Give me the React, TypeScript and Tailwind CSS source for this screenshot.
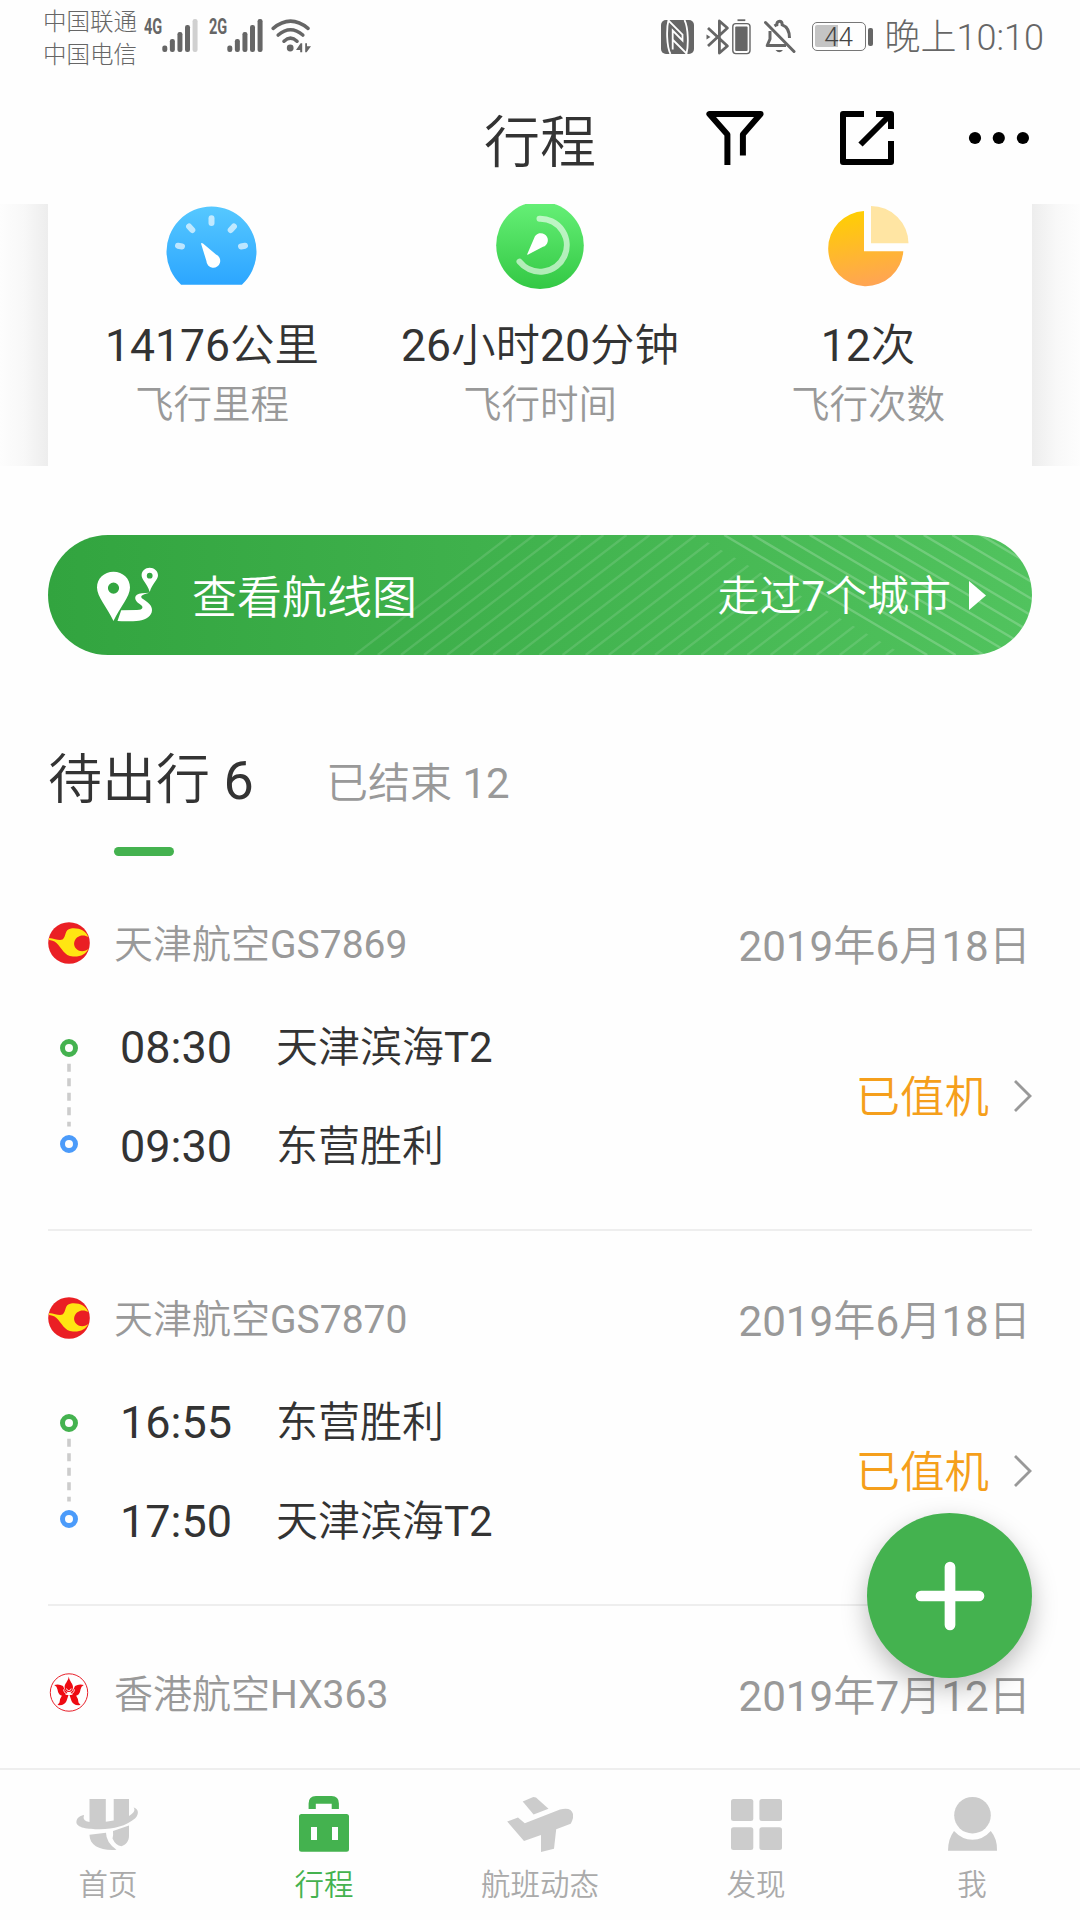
import React from 'react';

type IconProps = { className?: string };

function SignalBars({ weak = false }: { weak?: boolean }) {
  const heights = [6.5, 13, 20, 27, 33];
  return (
    <svg className="h-[33px] w-[36px]" viewBox="0 0 36 33">
      {heights.map((h, i) => (
        <rect key={h} x={0.3 + i * 7.57} y={33 - h} width="5" height={h} rx="2.2" fill={weak && i === 4 ? '#d0d0d0' : '#666'} />
      ))}
    </svg>
  );
}

function WifiIcon() {
  return (
    <svg className="h-[34px] w-[40px]" viewBox="0 0 40 34" fill="none" stroke="#666" strokeLinecap="round">
      <path d="M2.2 9.4Q19.5-5 37 9.4" strokeWidth="3.6" />
      <path d="M7.2 16Q19.5 5.5 31.8 16" strokeWidth="3.6" />
      <path d="M13 22.2Q19.5 16.2 26 22.2" strokeWidth="3.6" />
      <circle cx="19.2" cy="29" r="3.4" fill="#666" stroke="none" />
      <path d="M25 31l4.6-6.8h1.6v9h-2V31zM34.2 24.2h1.8v3h4l-4.4 6h-1.4z" fill="#666" stroke="none" />
    </svg>
  );
}

function NfcIcon() {
  return (
    <svg className="h-[34px] w-[33px]" viewBox="0 0 33 34">
      <rect width="33" height="34" rx="5" fill="#666" />
      <path d="M7.500 0C5.400 8 5.400 26 9.500 34M23.500 0C27.500 8 27.500 26 25.400 34" fill="none" stroke="#fefefe" strokeWidth="1.800" />
      <path d="M7.500 0.500L21.500 14.500V20.500L11.700 10.500V29.500M12 20L25.500 33.500" fill="none" stroke="#fefefe" strokeWidth="1.800" />
    </svg>
  );
}

function BluetoothIcon() {
  return (
    <svg className="h-[36px] w-[45px]" viewBox="0 0 45 36" fill="none" stroke="#666">
      <path d="M2 9L21.400 27L13.400 34V2L21.400 9L2 27" strokeWidth="2.800" strokeLinejoin="round" />
      <path d="M0.500 15.500L4.500 18L0.500 20.500z" fill="#666" stroke="none" />
      <rect x="26.800" y="4.600" width="17.200" height="30" rx="3" strokeWidth="1.400" />
      <rect x="29.200" y="7.400" width="12.400" height="24.600" rx="1" fill="#666" stroke="none" />
      <path d="M31.500 1.200h7.800" strokeWidth="1.800" />
    </svg>
  );
}

function BellOffIcon() {
  return (
    <svg className="h-[35px] w-[32px]" viewBox="0 0 32 35" fill="none" stroke="#666" strokeWidth="3">
      <path d="M1.500 3.500L30 32.500" strokeLinecap="round" />
      <path d="M10.500 7Q12 6 12.800 5.800Q12.800 2.200 15.500 2.200Q18.200 2.200 18.200 5.800Q25.500 8.500 25.500 19" />
      <path d="M6 12V20L3.200 26.500H22" strokeLinejoin="round" />
      <path d="M11.500 31h7.500q-3.700 4.600-7.500 0z" fill="#666" stroke="none" />
    </svg>
  );
}

function StatusBattery() {
  return (
    <div className="flex items-center gap-[2px]">
      <div className="relative flex h-[29px] w-[54px] items-center justify-center rounded-[5px] border-[1.5px] border-[#777]">
        <div className="absolute top-[2px] left-[2px] h-[22px] w-[23px] rounded-l-[2px] bg-[#c4c4c4]" />
        <span className="relative font-['Roboto'] text-[26px] leading-[26px] font-light text-[#444]">44</span>
      </div>
      <div className="h-[18px] w-[5px] rounded-[2px] bg-[#666]" />
    </div>
  );
}

function FilterIcon() {
  return (
    <svg className="h-[54px] w-[58px]" viewBox="0 0 58 54" fill="none" stroke="#000" strokeWidth="6">
      <path d="M21.400 54V23.400L3.400 3H54.600L36.900 23.400V44.500" strokeLinejoin="round" />
    </svg>
  );
}

function ShareIcon() {
  return (
    <svg className="h-[54px] w-[54px]" viewBox="0 0 54 54" fill="none" stroke="#000" strokeWidth="6" strokeLinejoin="round">
      <path d="M24 3H3V51H51V30" />
      <path d="M36 3H51V18" />
      <path d="M50 4L20.500 33.500" />
    </svg>
  );
}

function MoreIcon() {
  return (
    <svg className="h-[14px] w-[62px]" viewBox="0 0 62 14">
      <circle cx="7" cy="7" r="6.100" />
      <circle cx="30.800" cy="7" r="6.100" />
      <circle cx="54.900" cy="7" r="6.100" />
    </svg>
  );
}

function GaugeIcon() {
  return (
    <svg className="h-[96px] w-[96px]" viewBox="0 0 96 96">
      <defs>
        <linearGradient id="gauge" x1="0" y1="0" x2="0" y2="1">
          <stop offset="0" stopColor="#56c8ff" />
          <stop offset="1" stopColor="#2ca6ff" />
        </linearGradient>
      </defs>
      <path d="M17.100 80.700A45 45 0 1 1 77.900 80.700z" fill="url(#gauge)" />
      <g stroke="#fff" strokeOpacity="0.650" strokeWidth="6" strokeLinecap="round">
        <path d="M47.500 14.300V19" />
        <path d="M25.100 22.500L28.300 26" />
        <path d="M69.900 22.500L66.700 26" />
        <path d="M14 41.700L18 42.500" />
        <path d="M81 41.700L77 42.500" />
      </g>
      <path d="M37 39.500Q37.700 38.300 39 39.600L52 50.500A6.900 6.900 0 1 1 42.400 57z" fill="#fff" />
    </svg>
  );
}

function ClockIcon() {
  return (
    <svg className="h-[96px] w-[96px]" viewBox="0 0 96 96">
      <defs>
        <linearGradient id="clock" x1="0" y1="0" x2="0" y2="1">
          <stop offset="0" stopColor="#66f077" />
          <stop offset="1" stopColor="#33c844" />
        </linearGradient>
      </defs>
      <circle cx="48" cy="41.300" r="43.800" fill="url(#clock)" />
      <path d="M47.500 14.700A26.500 26.500 0 1 1 27.500 57.700" fill="none" stroke="#fff" strokeOpacity="0.600" strokeWidth="6" strokeLinecap="round" />
      <path d="M35.300 50Q34.800 51 36.200 50.400L51 42.800A7 7 0 1 0 42.200 34z" fill="#fff" />
    </svg>
  );
}

function PieIcon() {
  return (
    <svg className="h-[96px] w-[96px]" viewBox="0 0 96 96">
      <defs>
        <linearGradient id="pie" x1="0.200" y1="0" x2="0.400" y2="1">
          <stop offset="0" stopColor="#ffd000" />
          <stop offset="1" stopColor="#ffa552" />
        </linearGradient>
      </defs>
      <path d="M44 7V47.200H83.300A37.600 37.600 0 1 1 44 7z" fill="url(#pie)" />
      <path d="M51 2A37.500 37.500 0 0 1 88.500 39.200H51z" fill="#ffe5a3" />
    </svg>
  );
}

function RouteIcon() {
  return (
    <svg className="h-[56px] w-[62px]" viewBox="0 0 62 56" fill="#fff">
      <path fillRule="evenodd" d="M16.500 4.700C7 4.700 0 11.500 0 20.500C0 30 10 40 16.500 54C23 40 33 30 33 20.500C33 11.500 26 4.700 16.500 4.700zM16.500 15.500a5.600 5.600 0 1 1 0 11.200a5.600 5.600 0 1 1 0-11.200z" />
      <path fillRule="evenodd" d="M52.700 0.700C48.200 0.700 44.600 4 44.600 8.300C44.600 13 50 16 52.700 25C55.500 16 61 13 61 8.300C61 4 57.200 0.700 52.700 0.700zM52.700 5.800a2.900 2.900 0 1 1 0 5.800a2.900 2.900 0 1 1 0-5.800z" />
      <path d="M20.500 54L24.200 43.200L40 43C46.500 42.800 46.800 39.500 43 37.200C36.500 33.500 36 27 45 26.200L52.500 25.700C44 27.500 42.500 29.500 46 32C51 35.500 55 38 55 43C55 49 49 53 42 53.700C37 54.200 28 54.500 20.500 54z" />
    </svg>
  );
}

function BannerLines() {
  const rising = Array.from({ length: 26 }, (_, i) => 306.7 + i * 23.1);
  const falling = Array.from({ length: 10 }, (_, i) => 676.2 + i * 28.5);
  return (
    <svg className="absolute inset-0 h-[120px] w-[984px]" viewBox="0 0 984 120" fill="none" stroke="#fff" strokeWidth="2.400">
      <defs>
        <clipPath id="rising">
          <path d="M0 0H647L856 120H0z" />
        </clipPath>
      </defs>
      <g clipPath="url(#rising)" strokeOpacity="0.120">
        {rising.map((x) => (
          <path key={x} d={`M${x} 120l156.300-120`} />
        ))}
      </g>
      <g strokeOpacity="0.200">
        {falling.map((x) => (
          <path key={x} d={`M${x} 0l203 120`} />
        ))}
      </g>
    </svg>
  );
}

function TianjinLogo() {
  return (
    <svg className="h-[42px] w-[42px]" viewBox="0 0 42 42">
      <circle cx="21" cy="21" r="20.800" fill="#ea1f24" />
      <path d="M1 16C7 16.500 11 19 14.500 17.500C18.500 15 16 7.500 23 6.500C31 5.500 38 9 40.300 15C37.500 13 32.500 12.500 29 15.500C25.500 18.500 25 24 28.500 27C32 30.500 38 29.500 40.500 26.500C38 32.500 32 35 25 34.500C16 34 14 26 8.500 21C6 18.700 3 18 1 18z" fill="#ffe512" />
    </svg>
  );
}

function HongKongLogo() {
  return (
    <svg className="h-[42px] w-[42px]" viewBox="0 0 42 42">
      <circle cx="21" cy="20.500" r="18.700" fill="none" stroke="#e8202a" strokeWidth="1" />
      <g fill="#ee0a12">
        <path d="M20.800 4.500C21.300 9.500 25.200 11.500 25 15.500Q24.500 20 20.800 20Q17 20 16.600 15.500C16.400 11.500 20.200 9.500 20.800 4.500z" />
        <path d="M35.800 13Q31 11.500 27 14Q25.500 18.500 22.500 21L26.500 24Q32 23.500 32.500 17.500Q33 14 35.800 13z" />
        <path d="M6.200 13Q11 11.500 15 14Q16.500 18.500 19.500 21L15.500 24Q10 23.500 9.500 17.500Q9 14 6.200 13z" />
        <path d="M21.500 23L27.500 22.500Q30.500 27 30.500 30.500L32.500 33Q25.500 34 23.500 29z" />
        <path d="M20.500 23L14.500 22.500Q11.500 27 11.500 30.500L9.500 33Q16.500 34 18.500 29z" />
      </g>
      <path d="M15.500 17.500Q16.500 22.500 21 22.500Q25.500 22.500 26.500 17.500M18.500 16.500Q18.800 18.600 20.800 18.600Q23 18.600 23.200 16.500" fill="none" stroke="#fff" strokeWidth="0.900" />
    </svg>
  );
}

function RouteDots() {
  return (
    <svg className="h-[116px] w-[20px]" viewBox="0 0 20 116" fill="none">
      <circle cx="10" cy="10" r="6.500" stroke="#44b24f" strokeWidth="5" />
      <path d="M10 25.700V88.500" stroke="#ccc" strokeWidth="3.600" strokeDasharray="8 6.500" />
      <circle cx="10" cy="106" r="6.500" stroke="#4b9bfa" strokeWidth="5" />
    </svg>
  );
}

function HomeIcon({ className }: IconProps) {
  return (
    <svg className={className} viewBox="0 0 64 56" fill="currentColor">
      <path d="M13.500 3H29.800V25.800L37.700 24.600V3H53V20C57 17.500 60 14.500 57.500 11.500C62 12.500 64 17.500 59 22.500C50 30 38 33 24 33.200C11 33.500 -1 31.500 0.500 25C1 22 4.500 19.300 8 19Q6 25 13.500 26z" />
      <path d="M13.500 38.800L30 36.800Q30 46.500 40.500 53.800C25 55 13.500 50 13.500 38.800z" />
      <path d="M37 35L53 29.500V40C53 45 50 49 45.500 50.200Q39.500 49.500 36.500 42.500Q37.500 39.500 37 35z" />
    </svg>
  );
}

function TripIcon({ className }: IconProps) {
  return (
    <svg className={className} viewBox="0 0 64 56" fill="currentColor">
      <path d="M16.600 13V7.500Q16.600 0 24 0H39.500Q46.900 0 46.900 7.500V13H39.700V7.800H23.800V13z" />
      <path fillRule="evenodd" d="M9.500 18H54.500Q57 18 57 20.500V53.300Q57 55.800 54.500 55.800H9.500Q7 55.800 7 53.300V20.500Q7 18 9.500 18zM19 31V44H25V31zM40 31V44H46V31z" />
    </svg>
  );
}

function PlaneIcon({ className }: IconProps) {
  return (
    <svg className={className} viewBox="1 1 66 56" fill="currentColor">
      <path d="M16.700 6.500L27.300 2L30 2.500L42.500 13.700L27.600 19.500z" />
      <path d="M1.200 26.500L12 22.500L18.800 28.300L54 14.500Q65 11.500 67 19Q68 23 64.700 28.700L50.200 34.300L48 53.700L35 57V40L18 46z" />
    </svg>
  );
}

function DiscoverIcon({ className }: IconProps) {
  return (
    <svg className={className} viewBox="0 0 64 56" fill="currentColor">
      <rect x="7" y="3" width="22.300" height="22" rx="2.500" />
      <rect x="35.400" y="3" width="22.600" height="22" rx="2.500" />
      <rect x="7" y="31.300" width="22.300" height="22.700" rx="2.500" />
      <rect x="35.400" y="31.300" width="22.600" height="22.700" rx="2.500" />
    </svg>
  );
}

function MeIcon({ className }: IconProps) {
  return (
    <svg className={className} viewBox="0 0 64 56" fill="currentColor">
      <circle cx="32.500" cy="19.200" r="18.300" />
      <path d="M14 35Q22 43.700 32.500 43.700Q43 43.700 50.800 35Q57.500 43 57 54.800H8Q8 43 14 35z" />
    </svg>
  );
}

function StatusBar() {
  return (
    <div className="flex h-[73px] shrink-0 justify-between pr-[36px] pl-[43px] font-['Roboto','Noto_Sans_CJK_SC_Light','Noto_Sans_CJK_SC',sans-serif] text-[#666]">
      <div className="flex">
        <div className="flex flex-col pt-[6px] text-[23.500px] leading-[32.700px]">
          <span>中国联通</span>
          <span>中国电信</span>
        </div>
        <div className="ml-[7px] flex pt-[19px]">
          <span className="h-[22px] w-[18px] origin-left scale-x-[0.660] font-['Roboto'] text-[22px] leading-[16px] font-bold">4G</span>
          <SignalBars weak />
        </div>
        <div className="ml-[11px] flex pt-[19px]">
          <span className="h-[22px] w-[18px] origin-left scale-x-[0.660] font-['Roboto'] text-[22px] leading-[16px] font-bold">2G</span>
          <SignalBars />
        </div>
        <div className="ml-[8px] pt-[19px]">
          <WifiIcon />
        </div>
      </div>
      <div className="flex h-[73px] items-center">
        <NfcIcon />
        <div className="ml-[12px]">
          <BluetoothIcon />
        </div>
        <div className="mr-[16px] ml-[13px]">
          <BellOffIcon />
        </div>
        <StatusBattery />
        <span className="ml-[12px] pt-[2px] text-[36px] leading-[40px] whitespace-nowrap">
          晚上<span className="font-light">10:10</span>
        </span>
      </div>
    </div>
  );
}

function Header() {
  return (
    <header className="grid h-[131px] shrink-0 grid-cols-[1fr_auto_1fr] items-center pb-px text-[#333]">
      <span />
      <h1 className="pt-[10px] text-[56px] leading-[64px]">行程</h1>
      <div className="flex items-center justify-end pr-[50px]">
        <FilterIcon />
        <div className="mr-[74px] ml-[76px]">
          <ShareIcon />
        </div>
        <MoreIcon />
      </div>
    </header>
  );
}

const stats = [
  { icon: <GaugeIcon />, value: '14176公里', label: '飞行里程' },
  { icon: <ClockIcon />, value: '26小时20分钟', label: '飞行时间' },
  { icon: <PieIcon />, value: '12次', label: '飞行次数' },
];

function StatsCard() {
  return (
    <section className="flex h-[262px] shrink-0">
      <div className="w-[48px] bg-linear-to-r from-[#fdfdfd] via-[#f8f8f8] to-[#ededed]" />
      <div className="grid flex-1 grid-cols-3">
        {stats.map((s) => (
          <div key={s.label} className="flex flex-col items-center">
            {s.icon}
            <span className="mt-[20px] text-[44.500px] leading-[53px] whitespace-nowrap text-[#333]">{s.value}</span>
            <span className="mt-[8px] text-[38.500px] leading-[48px] text-[#999]">{s.label}</span>
          </div>
        ))}
      </div>
      <div className="w-[48px] bg-linear-to-l from-[#fdfdfd] via-[#f8f8f8] to-[#ededed]" />
    </section>
  );
}

function RouteBanner() {
  return (
    <button className="relative mx-[48px] mt-[69px] flex h-[120px] shrink-0 items-center justify-between overflow-hidden rounded-full bg-linear-to-r from-[#32a43f] via-[#41b34e] to-[#51c35e] pr-[45px] pl-[49px] text-white">
      <BannerLines />
      <span className="relative flex items-center gap-[33px]">
        <RouteIcon />
        <span className="pt-[7px] text-[45px] leading-[52px]">查看航线图</span>
      </span>
      <span className="relative flex items-center gap-[18px] pt-px">
        <span className="pt-[3px] text-[42px] leading-[50px]">走过7个城市</span>
        <svg className="h-[29px] w-[18px]" viewBox="0 0 18 29" fill="#fff">
          <path d="M0 0L17 14.500L0 29z" />
        </svg>
      </span>
    </button>
  );
}

function Tabs() {
  return (
    <div className="flex h-[201px] shrink-0 items-start pt-[95px] pl-[48px]">
      <div className="flex w-[278px] flex-col">
        <span className="text-[54px] leading-[62px] whitespace-nowrap text-[#333]">待出行 6</span>
        <span className="mt-[35px] ml-[66px] h-[9px] w-[60px] rounded-full bg-[#44b24f]" />
      </div>
      <span className="pt-[3px] text-[42px] leading-[62px] text-[#999]">已结束 12</span>
    </div>
  );
}

type Trip = {
  logo: React.ReactNode;
  flight: string;
  date: string;
  legs?: { time: string; place: string }[];
};

const trips: Trip[] = [
  {
    logo: <TianjinLogo />,
    flight: '天津航空GS7869',
    date: '2019年6月18日',
    legs: [
      { time: '08:30', place: '天津滨海T2' },
      { time: '09:30', place: '东营胜利' },
    ],
  },
  {
    logo: <TianjinLogo />,
    flight: '天津航空GS7870',
    date: '2019年6月18日',
    legs: [
      { time: '16:55', place: '东营胜利' },
      { time: '17:50', place: '天津滨海T2' },
    ],
  },
  { logo: <HongKongLogo />, flight: '香港航空HX363', date: '2019年7月12日' },
];

function TripRow({ trip }: { trip: Trip }) {
  return (
    <article className="mx-[48px] h-[375px] shrink-0 border-b-2 border-[#eee] pt-[26px]">
      <div className="flex h-[122px] items-center justify-between">
        <div className="flex items-center">
          {trip.logo}
          <span className="ml-[24px] pt-[4px] text-[39px] leading-[48px] text-[#999]">{trip.flight}</span>
        </div>
        <span className="pt-[7px] pr-[1px] text-[42.200px] leading-[50px] text-[#999]">{trip.date}</span>
      </div>
      {trip.legs && (
        <div className="flex pt-[13px]">
          <div className="ml-[11px] pt-[21px]">
            <RouteDots />
          </div>
          <div className="ml-[41px] flex flex-col">
            {trip.legs.map((leg) => (
              <div key={leg.time} className="flex h-[99px] items-start">
                <span className="w-[156px] pt-[4px] text-[45px] leading-[54px] text-[#333]">{leg.time}</span>
                <span className="pt-[4px] text-[42px] leading-[53px] text-[#333]">{leg.place}</span>
              </div>
            ))}
          </div>
          <div className="ml-auto flex h-[158px] items-center gap-[25px]">
            <span className="pt-[4px] text-[44.500px] leading-[52px] text-[#f59f1b]">已值机</span>
            <svg className="h-[32px] w-[18px]" viewBox="0 0 18 32" fill="none" stroke="#999" strokeWidth="2.800">
              <path d="M1 1L16 16L1 31" />
            </svg>
          </div>
        </div>
      )}
    </article>
  );
}

const navItems = [
  { label: '首页', Icon: HomeIcon },
  { label: '行程', Icon: TripIcon, active: true },
  { label: '航班动态', Icon: PlaneIcon },
  { label: '发现', Icon: DiscoverIcon },
  { label: '我', Icon: MeIcon },
];

function BottomNav() {
  return (
    <nav className="z-10 grid h-[152px] shrink-0 grid-cols-5 border-t-2 border-[#eee] bg-[#fefefe]">
      {navItems.map(({ label, Icon, active }) => (
        <div key={label} className={active ? 'flex flex-col items-center pt-[26px] text-[#44b24f]' : 'flex flex-col items-center pt-[26px] text-[#ccc]'}>
          <Icon className="h-[56px] w-[66px]" />
          <span className={active ? 'mt-[13px] text-[29.500px] leading-[40px]' : 'mt-[13px] text-[29.500px] leading-[40px] text-[#aaa]'}>{label}</span>
        </div>
      ))}
    </nav>
  );
}

export default function App() {
  return (
    <div className="relative flex h-[1920px] w-[1080px] flex-col overflow-hidden bg-[#fefefe] font-['Roboto','Noto_Sans_CJK_SC_DemiLight','Noto_Sans_CJK_SC',sans-serif]">
      <StatusBar />
      <Header />
      <main className="flex min-h-0 flex-1 flex-col overflow-hidden">
        <StatsCard />
        <RouteBanner />
        <Tabs />
        {trips.map((trip) => (
          <TripRow key={trip.flight} trip={trip} />
        ))}
      </main>
      <BottomNav />
      <button className="absolute right-[48px] bottom-[242px] flex h-[165px] w-[165px] items-center justify-center rounded-full bg-[#44b24f] shadow-[0_10px_26px_rgba(0,0,0,0.260)]">
        <svg className="h-[70px] w-[70px]" viewBox="0 0 70 70" stroke="#fff" strokeWidth="10.700" strokeLinecap="round">
          <path d="M35 6V64M6 35H64" />
        </svg>
      </button>
    </div>
  );
}
